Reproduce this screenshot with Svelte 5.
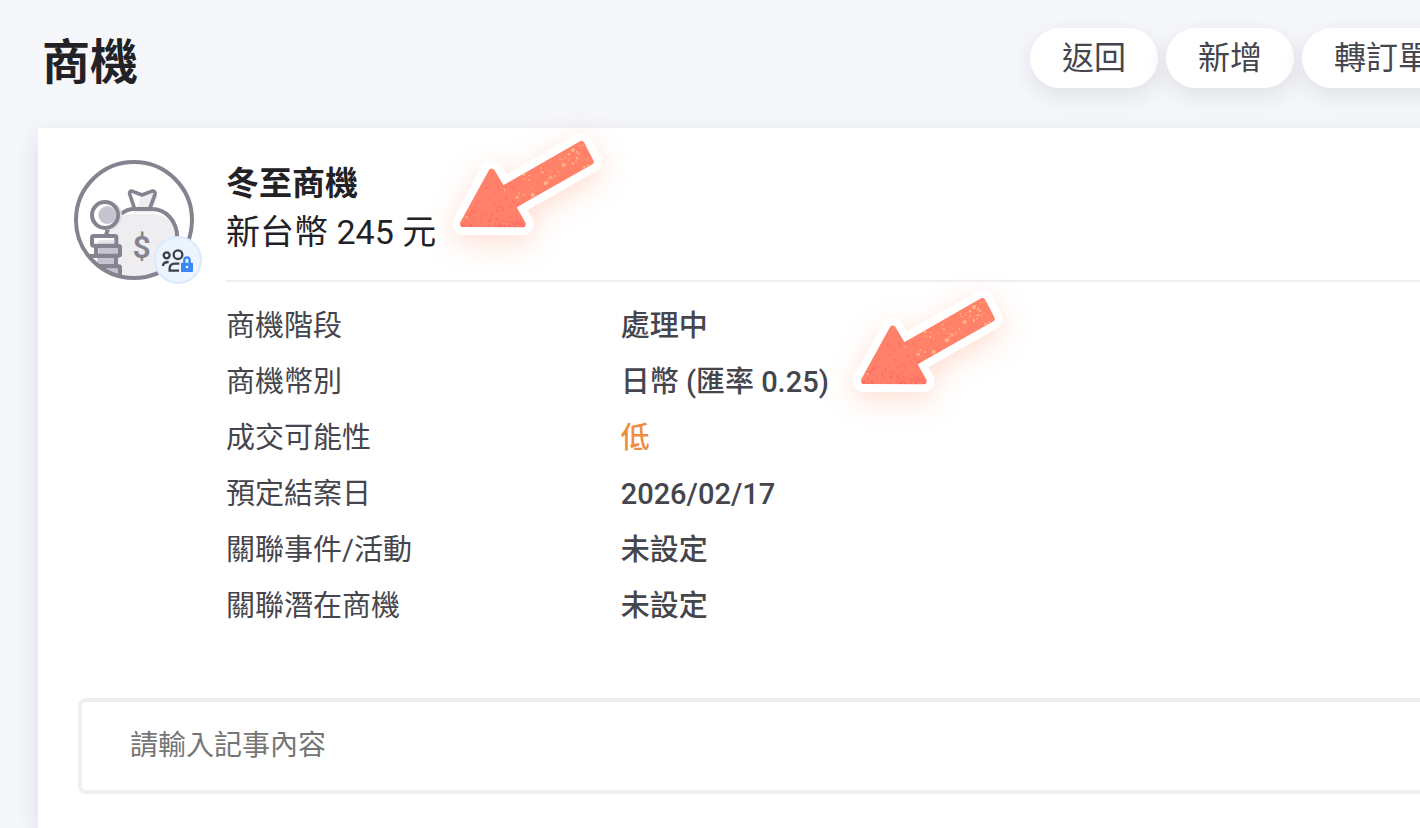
<script lang="ts">
  const actions = ['返回', '新增', '轉訂單'];

  const details = [
    { label: '商機階段', value: '處理中' },
    { label: '商機幣別', value: '日幣 (匯率 0.25)' },
    { label: '成交可能性', value: '低', tone: 'low' },
    { label: '預定結案日', value: '2026/02/17' },
    { label: '關聯事件/活動', value: '未設定' },
    { label: '關聯潛在商機', value: '未設定' }
  ];

  let note = $state('');

  const arrowPoints = '70,296 155,141 187,194 424,58 451,110 216,243 247,297';

  // repeatable noise, so both arrows share the same speckles
  function makeSpecks(count: number, seed: number) {
    let s = seed;
    const next = () => {
      s = (s * 16807) % 2147483647;
      return s / 2147483647;
    };
    return Array.from({ length: count }, () => ({ a: next(), b: next(), c: next() }));
  }

  const lightSpecks = makeSpecks(85, 4211).map(({ a, b, c }) => {
    const t = Math.sqrt(a);
    return { x: 210 + t * 235, y: 208 - t * 134 + (b - 0.5) * 66, r: 1 + c * c * 3 };
  });

  const pinkSpecks = makeSpecks(200, 977).map(({ a, b, c }) => ({
    x: 65 + a * 190,
    y: 305 - b * b * 130,
    r: 1 + c * 3
  }));

  const largeSpecks = [
    [399, 75, 6], [387, 88, 4], [371, 120, 6], [317, 175, 6], [278, 210, 6],
    [232, 217, 5], [251, 148, 5], [434, 127, 5], [444, 122, 4], [84, 253, 6],
    [79, 276, 4], [194, 195, 3], [411, 99, 4], [345, 153, 3]
  ];
</script>

{#snippet arrow(id: string)}
  <svg class="arrow {id}" viewBox="0 0 540 420" aria-hidden="true">
    <defs>
      <clipPath id="{id}-clip"><polygon points="61,306 155,129 190,180 428,47 462,112 230,247 258,307" /></clipPath>
    </defs>
    <polygon class="outline" points={arrowPoints} />
    <polygon class="body" points={arrowPoints} />
    <g clip-path="url(#{id}-clip)">
      {#each pinkSpecks as dot}
        <circle cx={dot.x} cy={dot.y} r={dot.r} fill="#fa5f66" opacity="0.4" />
      {/each}
      {#each lightSpecks as dot}
        <circle cx={dot.x} cy={dot.y} r={dot.r} fill="#ffb77d" opacity="0.85" />
      {/each}
      {#each largeSpecks as [x, y, r]}
        <circle cx={x} cy={y} {r} fill="#ffb986" opacity="0.9" />
      {/each}
    </g>
  </svg>
{/snippet}

<div class="viewport">
  <div class="page">
    <header class="page-header">
      <h1>商機</h1>
      <div class="actions">
        {#each actions as action}
          <button type="button" class="pill">{action}</button>
        {/each}
      </div>
    </header>

    <main class="card">
      <section class="summary">
        <div class="avatar">
          <svg class="avatar-icon" viewBox="30 30 360 360" aria-hidden="true">
            <defs>
              <clipPath id="avatar-clip"><circle cx="210" cy="210" r="174" /></clipPath>
            </defs>
            <g clip-path="url(#avatar-clip)" stroke-linejoin="round" stroke-linecap="round">
              <path d="M130 400V258C136 216 168 194 200 192H262C312 192 344 226 346 280V400Z" fill="#eeeef1" />
              <path d="M205 188Q225 178 228 140L262 128L282 138L262 188Z" fill="#eeeef1" />
              <path d="M175 189Q189 178 206 177H263C306 177 338 212 340 262M133 234L127 252" fill="none" stroke="#85838f" stroke-width="12" />
              <path d="M211 174L197 132Q195 121 206 124L234 135L262 124Q275 121 273 133L258 174" fill="none" stroke="#85838f" stroke-width="11" />
              <circle cx="130" cy="196" r="44" fill="#dcdce2" />
              <circle cx="123" cy="195" r="39" fill="#fff" stroke="#85838f" stroke-width="12" />
              <circle cx="130" cy="195" r="27" fill="#c6c5cf" />
              <rect x="84" y="258" width="72" height="29" rx="5" fill="#fff" />
              <path d="M102 282V274Q102 269 110 269H150V282Z" fill="#e5e5ea" />
              <rect x="84" y="258" width="73" height="29" rx="5" fill="none" stroke="#85838f" stroke-width="12" />
              <rect x="96" y="288" width="72" height="29" rx="4" fill="#c6c5cf" />
              <path d="M96 290H103V316H96Z" fill="#fff" />
              <rect x="96" y="288" width="72" height="29" rx="4" fill="none" stroke="#85838f" stroke-width="12" />
              <rect x="66" y="318" width="90" height="31" fill="#c6c5cf" />
              <path d="M66 320H100V346H66Z" fill="#fff" />
              <path d="M66 318H156V349H66" fill="none" stroke="#85838f" stroke-width="12" />
              <rect x="96" y="349" width="72" height="42" rx="4" fill="#c6c5cf" stroke="#85838f" stroke-width="12" />
            </g>
            <text x="233" y="325" text-anchor="middle">$</text>
            <circle cx="210" cy="210" r="174" fill="none" stroke="#85838f" stroke-width="12" />
          </svg>
          <svg class="badge" viewBox="270 258 144 144" aria-hidden="true">
            <circle cx="342" cy="330" r="69" fill="#ebf4ff" stroke="#dbeafe" stroke-width="6" />
            <g fill="none" stroke="#3f3f48" stroke-width="7">
              <circle cx="308" cy="316" r="9" />
              <circle cx="342" cy="314" r="13" />
              <path d="M297 348Q297 336 314 336" />
              <path d="M346 341H332Q317 342 317 355V362H345" />
              <path d="M361 340V331Q361 322 369 322Q377 322 377 331V340" stroke="#3b86f7" />
            </g>
            <rect x="351" y="338" width="36" height="28" rx="2" fill="#3b86f7" />
            <circle cx="369" cy="351" r="4" fill="#fff" />
          </svg>
        </div>

        <div class="info">
          <div class="heading">
            <h2>冬至商機</h2>
            <p class="amount">新台幣 245 元</p>
          </div>
          <dl>
            {#each details as item}
              <div class="row">
                <dt>{item.label}</dt>
                <dd class={item.tone}>{item.value}</dd>
              </div>
            {/each}
          </dl>
        </div>
      </section>

      <div class="note">
        <input type="text" aria-label="記事內容" placeholder="請輸入記事內容" bind:value={note} />
      </div>

      {@render arrow('amount-arrow')}
      {@render arrow('currency-arrow')}
    </main>
  </div>
</div>

<style>
  :global(body) {
    background: #f6f7fb;
  }

  .viewport {
    overflow: hidden;
    font-family: Roboto, 'Noto Sans CJK TC', sans-serif;
    color: #222226;
  }

  /* the page runs past the right edge of the window */
  .page {
    box-sizing: border-box;
    width: calc(100% + 80px);
    min-height: 100vh;
    padding: 0 38px;
    display: flex;
    flex-direction: column;
  }

  .page-header {
    display: flex;
    justify-content: space-between;
    align-items: flex-start;
    padding: 28px 0 30px 4px;
  }

  h1,
  h2,
  p,
  dl,
  dd {
    margin: 0;
  }

  h1 {
    font-size: 48px;
    line-height: 70px;
    font-weight: 700;
  }

  .actions {
    display: flex;
    gap: 8px;
  }

  .pill {
    height: 60px;
    padding: 0 32px;
    border: 0;
    border-radius: 30px;
    background: #fff;
    color: #45454d;
    font-family: inherit;
    font-size: 32px;
    line-height: 60px;
    white-space: nowrap;
    box-shadow: 0 8px 24px rgba(34, 34, 38, 0.1);
    cursor: pointer;
  }

  .card {
    position: relative;
    flex: 1;
    padding: 32px 0 34px 36px;
    background: #fff;
    box-shadow: 0 8px 24px rgba(34, 34, 60, 0.12);
  }

  .summary {
    display: flex;
    align-items: flex-start;
    gap: 32px;
    padding-right: 40px;
  }

  .avatar {
    position: relative;
    flex: none;
    width: 120px;
    height: 120px;
  }

  .avatar-icon {
    display: block;
    width: 100%;
    height: 100%;
  }

  .avatar-icon text {
    font-size: 96px;
    font-weight: 600;
    fill: #85838f;
  }

  .badge {
    position: absolute;
    right: -8px;
    bottom: -4px;
    width: 48px;
    height: 48px;
  }

  .info {
    flex: 1;
  }

  .heading {
    padding-bottom: 24px;
    border-bottom: 2px solid #efeff0;
  }

  h2,
  .amount {
    font-size: 33px;
    line-height: 48px;
  }

  h2 {
    font-weight: 700;
  }

  .amount {
    font-size: 34px;
  }

  dl {
    padding: 16px 0 64px;
  }

  .row {
    display: grid;
    grid-template-columns: 33% 1fr;
    font-size: 29px;
    line-height: 56px;
    color: #45454d;
  }

  dd {
    font-weight: 500;
  }

  .low {
    color: #f08c42;
  }

  .note {
    padding: 0 4px;
  }

  .note input {
    box-sizing: border-box;
    display: block;
    width: 100%;
    height: 96px;
    padding: 0 48px 2px;
    border: 4px solid #efeff0;
    border-radius: 8px;
    background: #fff;
    color: #45454d;
    font-family: inherit;
    font-size: 28px;
  }

  .note input::placeholder {
    color: #757575;
  }

  .arrow {
    position: absolute;
    width: 180px;
    height: 140px;
    overflow: visible;
    filter: drop-shadow(0 8px 14px rgba(255, 126, 80, 0.26));
    pointer-events: none;
  }

  .amount-arrow {
    left: 402px;
    top: -3px;
  }

  .currency-arrow {
    left: 803px;
    top: 154px;
  }

  .outline,
  .body {
    stroke-linejoin: round;
  }

  .outline {
    fill: #fff;
    stroke: #fff;
    stroke-width: 68px;
  }

  .body {
    fill: #ff8169;
    stroke: #ff8169;
    stroke-width: 20px;
  }
</style>
